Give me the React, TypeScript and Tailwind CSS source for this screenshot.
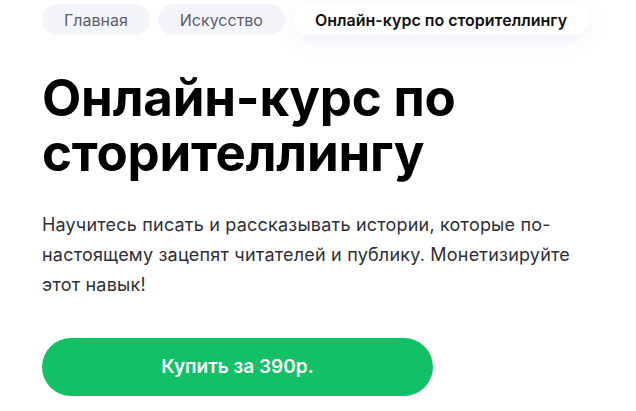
const crumbs = ['Главная', 'Искусство'];

function Breadcrumbs() {
  return (
    <nav className="flex items-center gap-2">
      {crumbs.map((c) => (
        <a
          key={c}
          className="flex h-[31px] items-center rounded-full bg-[#f4f5fb] px-[22px] text-[16px] text-[#5c5d6b]"
        >
          {c}
        </a>
      ))}
      <span className="flex h-[31px] items-center rounded-full bg-white px-[22px] text-[16px] font-semibold text-[#111] shadow-[0_6px_22px_rgba(110,120,190,0.10)]">
        Онлайн-курс по сторителлингу
      </span>
    </nav>
  );
}

export default function App() {
  return (
    <div
      className="min-h-[411px] bg-white pl-[42px] pt-[4px]"
      style={{ fontFamily: 'Inter, "Noto Sans", sans-serif' }}
    >
      <Breadcrumbs />
      <h1 className="mt-[35px] text-[51px] font-bold leading-[55px] tracking-[-0.2px] text-black">
        Онлайн-курс по
        <br />
        сторителлингу
      </h1>
      <p className="mt-[30px] max-w-[550px] text-[18px] leading-[30px] tracking-[0.2px] text-[#2f2f37]">
        Научитесь писать и рассказывать истории, которые по-настоящему зацепят читателей и публику. Монетизируйте этот навык!
      </p>
      <button className="mt-[38px] flex h-[58px] w-[391px] items-center justify-center rounded-full bg-[#13bf67] text-[19px] font-semibold text-white">
        Купить за 390р.
      </button>
    </div>
  );
}
